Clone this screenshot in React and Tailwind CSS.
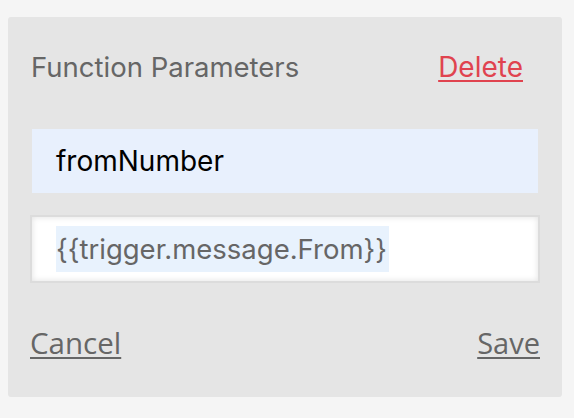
import React from 'react';

const App = () => {
  return (
    <div className="min-h-[418px] w-[574px] bg-[#f5f5f5] pt-[17px] pl-2 pr-3">
      <div className="h-[380px] rounded-[3px] bg-[#e5e5e5] px-[22px] pt-[34px] font-['Inter',sans-serif]">
        {/* Header */}
        <div className="flex items-center justify-between pl-[1px] pr-[17px]">
          <span className="text-[27.5px] leading-[32px] text-[#666666]">Function Parameters</span>
          <button className="text-[28px] leading-[32px] text-[#e0434f] underline underline-offset-[3px] decoration-[2px]">
            Delete
          </button>
        </div>

        {/* Name input */}
        <div className="mx-[2px] mt-[46px] flex h-[64px] items-center bg-[#e8f0fd] pl-[24px]">
          <span className="text-[28px] text-black">fromNumber</span>
        </div>

        {/* Value input */}
        <div className="mt-[22px] flex h-[68px] items-center border-2 border-[#dcdcdc] bg-white pl-[24px] shadow-[inset_0_0_6px_rgba(0,0,0,0.12)]">
          <span className="bg-[#e8f2fd] py-[7px] pr-[2px] text-[27.5px] leading-[32px] text-[#666666]">
            {'{{trigger.message.From}}'}
          </span>
        </div>

        {/* Actions */}
        <div className="mt-[44px] flex items-center justify-between font-['Open_Sans',sans-serif]">
          <button className="text-[29.5px] leading-[32px] text-[#666666] underline underline-offset-[3px] decoration-[2px]">
            Cancel
          </button>
          <button className="text-[29px] leading-[32px] text-[#666666] underline underline-offset-[3px] decoration-[2px]">
            Save
          </button>
        </div>
      </div>
    </div>
  );
};

export default App;
